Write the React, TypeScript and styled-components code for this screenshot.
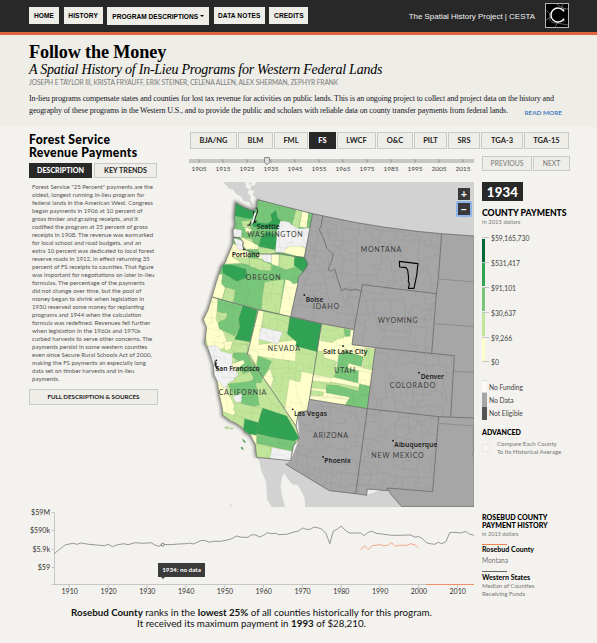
import React from 'react';
import styled, { createGlobalStyle } from 'styled-components';

const sans = 'Lato, "Liberation Sans", sans-serif';
const serif = '"Liberation Serif", serif';

const GlobalStyle = createGlobalStyle`
  * { box-sizing: border-box; }
  body { margin: 0; background: #f3f2ee; font-family: ${sans}; color: #222; }
  p, h1, h2, h3 { margin: 0; }
  button { font: inherit; margin: 0; padding: 0; border: 0; cursor: pointer; }
`;

const Page = styled.div`
  width: 597px;
  height: 643px;
  overflow: hidden;
  background: #f3f2ee;
`;

/* ---------- header ---------- */

const TopBar = styled.header`
  display: flex;
  align-items: flex-start;
  height: 35px;
  padding: 0 28px 0 29px;
  background: #282828;
  border-bottom: 3px solid #e0643c;
`;

const Nav = styled.nav`
  display: flex;
  align-items: flex-start;
  padding-top: 7px;
  gap: 4.6px;
`;

const NavButton = styled.button<{ $w: number; $tall?: boolean }>`
  width: ${(p) => p.$w}px;
  height: ${(p) => (p.$tall ? 18 : 17)}px;
  background: #eeede8;
  color: #000;
  font: bold 6.6px/17px "Liberation Sans", sans-serif;
  letter-spacing: ${(p) => (p.$tall ? 0 : 0.1)}px;
  white-space: nowrap;
`;

const Caret = styled.span`
  display: inline-block;
  margin-left: 2px;
  vertical-align: 1.5px;
  border: 2px solid transparent;
  border-top-color: #000;
  border-bottom: 0;
`;

const Brand = styled.div`
  display: flex;
  margin-left: auto;
  gap: 10px;
  color: #f2f2f2;
  font: 7.95px/33px "Liberation Sans", sans-serif;
  white-space: nowrap;
  svg { margin-top: 3px; }
`;

/* ---------- intro ---------- */

const Intro = styled.section`
  height: 92px;
  padding: 7px 0 0 29px;
  background: #eeede8;
  white-space: nowrap;
`;

const Title = styled.h1`
  font: bold 18.2px/20px ${serif};
  color: #000;
  letter-spacing: -0.14px;
`;

const Subtitle = styled.h2`
  font: italic 14px/15px ${serif};
  letter-spacing: -0.245px;
  color: #000;
`;

const Authors = styled.p`
  font-size: 6.7px;
  line-height: 11px;
  letter-spacing: -0.12px;
  color: #7b7b79;
`;

const Abstract = styled.p`
  width: 533px;
  margin-top: 5px;
  font: 8px/12px ${serif};
  letter-spacing: -0.11px;
  color: #151525;
`;

const AbstractEnd = styled.span`
  display: flex;
  justify-content: space-between;
`;

const ReadMore = styled.a`
  font: bold 6.4px/15px ${sans};
  letter-spacing: 0;
  color: #4a7fc0;
`;

/* ---------- body ---------- */

const Body = styled.main`
  display: flex;
  height: 380px;
  padding: 5px 0 0 29px;
`;

const Side = styled.aside`
  width: 161px;
  flex: none;
`;

const SideTitle = styled.h2`
  padding-top: 1px;
  font-size: 12.2px;
  font-weight: 900;
  line-height: 13.2px;
  letter-spacing: 0.3px;
  color: #000;
  white-space: nowrap;
`;

const Row = styled.div<{ $gap?: number; $mt?: number }>`
  display: flex;
  gap: ${(p) => p.$gap ?? 0}px;
  margin-top: ${(p) => p.$mt ?? 0}px;
`;

const Button = styled.button<{ $w: number; $h: number; $size: number; $active?: boolean; $light?: boolean }>`
  display: block;
  flex: none;
  width: ${(p) => p.$w}px;
  height: ${(p) => p.$h}px;
  line-height: ${(p) => p.$h - 2}px;
  border: 1px solid ${(p) => (p.$active ? '#282828' : '#c9c9c7')};
  background: ${(p) => (p.$active ? '#282828' : '#eeede8')};
  color: ${(p) => (p.$active ? '#fff' : p.$light ? '#777' : '#222')};
  font-size: ${(p) => p.$size}px;
  font-weight: ${(p) => (p.$active ? 900 : p.$light ? 400 : 700)};
  white-space: nowrap;
`;

const Description = styled.p`
  margin: 5px 0 6px 3px;
  font-size: 6.12px;
  line-height: 8px;
  color: #555;
  white-space: pre;
`;

const Content = styled.div`
  flex: none;
  width: 380px;
`;

const Slider = styled.div`
  width: 293px;
  height: 19px;
  margin-left: -1px;
`;

const Years = styled.div`
  display: flex;
  width: 288px;
  margin-left: -2px;
`;

const Year = styled.span`
  width: 24px;
  text-align: center;
  font-size: 6.5px;
  line-height: 7px;
  color: #444;
`;

const SliderTrack = styled.svg`
  display: block;
`;

const MapFrame = styled.div`
  position: relative;
  width: 284px;
  height: 325px;
  svg { display: block; }
`;

const ZoomButtons = styled.div`
  position: absolute;
  top: 6px;
  right: 2px;
  display: flex;
  flex-direction: column;
  align-items: center;
  gap: 0;
`;

const ZoomButton = styled.button<{ $focus?: boolean }>`
  width: 12px;
  height: 12px;
  box-sizing: content-box;
  border: 2px solid ${(p) => (p.$focus ? '#8ab4ea' : 'transparent')};
  border-radius: 2px;
  margin-top: ${(p) => (p.$focus ? -1 : -2)}px;
  background: #383838;
  background-clip: padding-box;
  color: #fff;
  font: bold 10px/11px "Liberation Sans", sans-serif;
`;

/* ---------- map legend ---------- */

const Legend = styled.div`
  width: 96px;
  padding-left: 8px;
  white-space: nowrap;
`;

const YearBadge = styled.div`
  width: 41px;
  height: 19px;
  background: #282828;
  color: #fff;
  font-size: 13.2px;
  font-weight: 900;
  line-height: 20px;
  text-align: center;
  letter-spacing: 0.2px;
`;

const LegendTitle = styled.h3<{ $size: number; $mt: number; $lh: number }>`
  margin-top: ${(p) => p.$mt}px;
  font-size: ${(p) => p.$size}px;
  font-weight: 900;
  line-height: ${(p) => p.$lh}px;
  color: #000;
`;

const Note = styled.p<{ $size?: number }>`
  font-size: ${(p) => p.$size ?? 5.9}px;
  line-height: 8px;
  color: #777;
  white-space: pre;
`;

const Scale = styled.div`
  height: 142px;
  padding-top: 7px;
`;

const Step = styled.div`
  display: flex;
  height: 24.9px;
`;

const StepBar = styled.span<{ $fill: string }>`
  width: 3px;
  height: 23px;
  margin-top: 5.5px;
  background: ${(p) => p.$fill};
`;

const Tick = styled.span`
  width: 7px;
  height: 1px;
  margin: 4px 2px 0 -3px;
  background: #c6c6c4;
`;

const StepLabel = styled.span`
  font-size: 6.75px;
  line-height: 10px;
  color: #444;
`;

const Key = styled.div<{ $fill: string; $edge: string }>`
  display: flex;
  align-items: center;
  height: 13.4px;
  gap: 2px;
  font-size: 6.7px;
  color: #444;
  &::before {
    content: '';
    width: 5px;
    height: 11.5px;
    background: ${(p) => p.$fill};
    border: solid ${(p) => p.$edge};
    border-width: 1px 0;
  }
`;

const Compare = styled.label`
  display: flex;
  gap: 7px;
  margin-top: 2.5px;
`;

const CheckBox = styled.span`
  width: 8px;
  height: 8px;
  margin-top: 4px;
  background: #f8f4f2;
  border: 1px solid #ebe6e3;
`;

/* ---------- history chart ---------- */

const History = styled.section`
  position: relative;
  display: flex;
  height: 99px;
  svg { display: block; flex: none; }
`;

const HistoryLegend = styled.div`
  padding: 6.5px 0 0 8px;
  white-space: nowrap;
`;

const SeriesLine = styled.span<{ $color: string; $mt: number }>`
  display: block;
  width: 25px;
  height: 1px;
  margin-top: ${(p) => p.$mt}px;
  background: ${(p) => p.$color};
`;

const SeriesName = styled.p`
  margin-top: 0.5px;
  font-size: 7.1px;
  font-weight: 700;
  line-height: 9px;
  color: #000;
`;

const Tooltip = styled.div`
  position: absolute;
  left: 158px;
  top: 56px;
  width: 47px;
  height: 14px;
  background: #3b3b3b;
  color: #fff;
  font-size: 6.3px;
  font-weight: 700;
  line-height: 14px;
  text-align: center;
  &::after {
    content: '';
    position: absolute;
    left: 3px;
    top: 14px;
    border: 2px solid transparent;
    border-top-color: #3b3b3b;
    border-bottom: 0;
  }
`;

const Summary = styled.p`
  width: 503px;
  padding-top: 1px;
  font-size: 9.77px;
  line-height: 11px;
  text-align: center;
  color: #111;
`;

/* ---------- map data, three units to a pixel ---------- */

const pale = '#ffffcc';
const light = '#c2e699';
const mid = '#78c679';
const deep = '#31a354';
const none = '#f1f1f2';

const coast =
  'M203 65 L200 88 L190 99 L165 90 L137 75 L133 120 L136 140 L129 158 L130 178 L128 200 L105 255 L95 265 L80 310 L66 357 L55 395 L40 425 L50 448 L45 495 L56 516 L70 561 L72 590 L82 611 L88 651 L97 690 L98 711 L120 728 L138 736 L160 752 L165 762 L182 772 L196 800 L200 838';

const states: Record<string, string> = {
  WA: 'M203 65 L368 107 L343 238 L310 235 L270 226 L245 228 L205 228 L162 215 L155 185 L130 178 L129 158 L136 140 L133 120 L137 75 L165 90 L190 99 L200 88Z',
  OR: 'M130 178 L155 185 L162 215 L205 228 L245 228 L270 226 L310 235 L343 238 L354 258 L345 275 L325 298 L323 320 L302 416 L205 395 L66 357 L80 310 L95 265 L105 255 L128 200Z',
  CA: 'M66 357 L205 395 L172 528 L318 744 L328 781 L310 804 L304 831 L302 848 L200 838 L196 800 L182 772 L165 762 L160 752 L138 736 L120 728 L98 711 L97 690 L88 651 L82 611 L72 590 L70 561 L56 516 L45 495 L50 448 L40 425 L55 395Z',
  NV: 'M205 395 L302 416 L395 437 L358 664 L352 698 L325 702 L318 744 L172 528Z',
  UT: 'M395 437 L492 455 L486 500 L556 509 L532 692 L358 664Z',
};

const patches: Record<string, [string, string][]> = {
  WA: [
    [mid, '120,60 370,60 370,240 120,240'],
    [deep, '137,75 165,90 196,98 190,122 165,120 135,113'],
    [light, '155,130 185,126 180,150 158,148'],
    [none, '130,152 155,156 154,178 128,176'],
    [pale, '164,148 184,152 184,168 168,162'],
    [deep, '185,131 232,137 246,128 242,110 258,96 262,118 272,128 262,155 230,150 190,146'],
    [mid, '155,170 215,160 212,200 165,180'],
    [light, '158,178 184,182 190,192 160,192'],
    [pale, '150,176 186,192 206,204 204,214 168,214 158,200'],
    [deep, '215,176 232,160 262,172 256,216 206,204'],
    [none, '262,152 272,128 298,132 305,140 325,140 325,152 360,150 350,212 335,205 285,224 256,222'],
    [light, '318,94 337,98 326,152 306,140 312,120'],
    [pale, '337,98 356,104 350,150 328,146'],
    [mid, '356,104 370,106 362,132 352,138'],
    [pale, '282,224 286,212 300,205 335,205 348,212 343,240'],
    [light, '205,206 256,216 256,230 205,230'],
  ],
  OR: [
    [mid, '50,170 360,170 360,420 50,420'],
    [pale, '125,196 160,205 182,230 162,256 103,258'],
    [none, '130,180 158,188 162,215 145,215'],
    [light, '128,236 182,240 178,262 155,256'],
    [none, '206,228 245,222 245,256 222,250'],
    [pale, '200,226 216,228 216,246 205,240'],
    [pale, '245,228 268,230 266,266 244,258'],
    [light, '268,230 314,235 316,266 290,276 266,266'],
    [deep, '314,235 343,238 355,258 340,282 312,262'],
    [light, '176,240 204,242 244,260 244,278 210,276 178,264'],
    [deep, '98,262 122,260 168,274 172,298 140,310 98,284'],
    [pale, '78,286 98,290 94,316 106,330 96,365 60,358'],
    [light, '108,328 136,336 130,378 96,366'],
    [light, '224,312 282,304 268,408 214,394 218,350'],
    [pale, '286,304 300,308 310,318 325,314 302,420 268,408'],
  ],
  CA: [
    [light, '30,340 340,340 340,860 30,860'],
    [pale, '60,355 84,364 78,425 100,462 112,495 98,512 56,516 36,430'],
    [mid, '84,362 156,382 146,420 154,440 134,474 88,452 84,435 108,415 82,400'],
    [light, '82,400 96,405 112,404 108,422 92,430'],
    [deep, '158,382 202,396 182,492 134,484 150,446 146,422'],
    [light, '120,496 172,500 172,528 128,522'],
    [pale, '100,492 128,490 122,512 106,518'],
    [none, '50,506 78,502 94,520 126,528 128,568 144,586 142,600 112,618 108,645 82,615 56,560'],
    [mid, '130,525 168,524 184,554 220,590 214,614 178,616 192,600 158,584 130,554 144,548 128,536'],
    [pale, '126,556 160,546 164,556 130,580'],
    [light, '132,600 180,580 190,598 170,614 136,624'],
    [mid, '114,618 196,608 208,682 164,690 140,654 126,642'],
    [pale, '72,606 86,610 108,636 124,664 142,700 128,712 98,700'],
    [none, '128,656 156,646 154,672 138,674'],
    [light, '136,672 216,692 210,736 144,714 130,694'],
    [deep, '164,722 206,734 202,768 190,778 160,756'],
    [deep, '218,690 290,714 328,781 308,792 202,768 206,728'],
    [mid, '202,770 318,790 308,820 198,796'],
    [pale, '180,768 198,772 200,800 190,790'],
    [none, '246,808 305,820 302,850 240,846'],
  ],
  NV: [
    [light, '170,390 400,390 400,750 170,750'],
    [pale, '200,393 222,400 206,500 320,485 316,550 240,540 205,534 172,528'],
    [light, '222,400 300,418 292,464 216,450'],
    [none, '214,448 278,462 264,498 206,484'],
    [deep, '300,416 396,437 384,522 316,504 320,492 292,468'],
    [mid, '205,534 245,550 232,578 214,604 200,568'],
    [pale, '218,602 240,572 250,602 242,632'],
    [pale, '335,580 370,588 356,702 318,748 284,698 298,604 330,612'],
    [pale, '172,512 205,522 198,560'],
  ],
  UT: [
    [pale, '350,430 560,430 560,700 350,700'],
    [light, '395,437 466,450 460,480 440,484 428,494 392,488'],
    [mid, '462,452 482,455 480,475 464,476'],
    [light, '382,518 402,520 400,538 440,550 430,600 366,588'],
    [mid, '446,530 470,520 520,536 515,566 475,556 474,570 506,578 506,616 432,598 442,560'],
    [light, '524,510 556,514 546,576 518,570'],
    [light, '366,602 508,628 506,640 362,630'],
    [light, '360,636 402,642 398,655 360,650'],
    [mid, '410,620 440,622 506,640 508,618 542,624 532,694 464,682 480,658 408,644'],
    [pale, '506,578 542,584 538,624 504,616'],
    [pale, '366,592 422,602 420,614 364,608'],
    [pale, '360,652 474,664 464,682 358,666'],
  ],
};

const grayLand =
  'M368 107 L420 118 L500 134 L580 147 L680 160 L755 167 L852 174 V986 H635 L602 948 L592 930 L592 938 L532 933 L530 952 L497 947 L418 938 L286 858 L302 848 L328 781 L302 416 L325 298 L354 258 L343 238Z';

const countyZones = [
  'M368 107 L500 134 L580 147 L755 167 L739 347 L517 320 L492 455 L302 416 L354 258 L343 238Z',
  'M517 320 L739 347 L725 528 L486 500Z',
  'M556 509 L793 533 L782 716 L532 692Z',
  'M532 692 L746 716 L728 941 L592 930 L497 947Z',
  'M358 664 L532 692 L497 947 L418 938 L286 858 L328 781 L318 744Z',
];

const borders = [
  'M203 65 L368 107 L420 118 L500 134 L580 147 L680 160 L755 167 L852 174',
  'M368 107 L343 238 L354 258 L345 275 L325 298 L323 320 L302 416',
  'M162 215 L205 228 L245 228 L270 226 L310 235 L343 238',
  'M66 357 L205 395 L302 416 L395 437 L492 455',
  'M205 395 L172 528 L318 744 L328 781 L310 804 L302 848 L200 838',
  'M395 437 L358 664 L352 698 L325 702 L318 744',
  'M358 664 L532 692 L746 716 L852 720',
  'M398 115 L394 142 L388 155 L402 186 L410 210 L430 230 L424 252 L414 275 L424 280 L434 272 L442 300 L455 338 L466 332 L480 337 L502 334 L514 341',
  'M517 320 L492 455 L486 500 L556 509 L793 533 L782 716',
  'M517 320 L739 347 L725 528',
  'M755 167 L745 303 L739 347',
  'M556 509 L532 692 L497 947',
  'M746 716 L728 941 L592 930 L592 938 L532 933 L530 952 L497 947 L418 938 L286 858',
  'M592 930 L602 948 L635 986 H852',
];

const outerBorders =
  'M745 303 L852 312 M732 437 L852 446 M790 580 L852 583 M748 736 L852 744 M850 744 V820 L847 835';

const wobble = (n: number) => {
  const s = Math.sin(n * 127.1 + 311.7) * 43758.5453;
  return s - Math.floor(s);
};

/* Irregular county grid with a few joints left open. */
const countyMesh = (x0: number, y0: number, x1: number, y1: number, step: number) => {
  const pt = (i: number, j: number) => {
    const x = x0 + i * step + (wobble(i * 31 + j * 7) - 0.5) * step * 0.7 - j * 2;
    const y = y0 + j * step + (wobble(i * 13 + j * 57) - 0.5) * step * 0.7 + i * 3;
    return [x, y];
  };
  let d = '';
  const cols = Math.ceil((x1 - x0) / step);
  const rows = Math.ceil((y1 - y0) / step);
  for (let i = 0; i < cols; i++) {
    for (let j = 0; j < rows; j++) {
      const [ax, ay] = pt(i, j);
      const [bx, by] = pt(i + 1, j);
      const [cx, cy] = pt(i, j + 1);
      if (wobble(i * 5 + j * 91) > 0.2) {
        const mx = (ax + bx) / 2;
        d += `M${ax.toFixed(0)} ${ay.toFixed(0)}L${mx.toFixed(0)} ${(ay + 3).toFixed(0)}L${(mx + 2).toFixed(0)} ${(by - 2).toFixed(0)}L${bx.toFixed(0)} ${by.toFixed(0)}`;
      }
      if (wobble(i * 71 + j * 3) > 0.2) {
        const my = (ay + cy) / 2;
        d += `M${ax.toFixed(0)} ${ay.toFixed(0)}L${(ax + 2).toFixed(0)} ${my.toFixed(0)}L${(cx - 2).toFixed(0)} ${(my + 3).toFixed(0)}L${cx.toFixed(0)} ${cy.toFixed(0)}`;
      }
    }
  }
  return d;
};

const grayMesh = countyMesh(280, 90, 800, 960, 37);
const colorMesh = countyMesh(30, 60, 570, 860, 40);

const stateNames: [string, number, number, number][] = [
  ['WASHINGTON', 172, 338, 176],
  ['OREGON', 167, 272, 305],
  ['IDAHO', 369, 447, 392],
  ['MONTANA', 512, 634, 222],
  ['WYOMING', 563, 683, 434],
  ['NEVADA', 233, 330, 518],
  ['CALIFORNIA', 86, 229, 650],
  ['ARIZONA', 369, 474, 780],
  ['UTAH', 433, 495, 585],
  ['COLORADO', 599, 736, 630],
  ['NEW MEXICO', 544, 701, 840],
];

const cities: [string, number, number, number, number, number][] = [
  ['Seattle', 200, 269, 153, 195, 132],
  ['Portland', 125, 209, 237, 161, 214],
  ['Boise', 347, 400, 372, 343, 351],
  ['Salt Lake City', 400, 532, 527, 459, 504],
  ['San Francisco', 77, 209, 579, 79, 547],
  ['Las Vegas', 312, 411, 713, 308, 694],
  ['Denver', 692, 762, 602, 687, 584],
  ['Albuquerque', 613, 742, 807, 609, 788],
  ['Phoenix', 403, 482, 854, 399, 837],
];

function WesternMap() {
  return (
    <svg width="284" height="325" viewBox="0 12 852 975">
      <defs>
        <filter id="soft" x="-20%" y="-20%" width="140%" height="140%">
          <feGaussianBlur stdDeviation="4.5" />
        </filter>
        {Object.keys(states).map((s) => (
          <clipPath id={`clip-${s}`} key={s}>
            <path d={states[s]} />
          </clipPath>
        ))}
        <clipPath id="clip-gray">
          <path d={countyZones.join(' ')} />
        </clipPath>
      </defs>
      <path
        fill="#d2d2d2"
        d="M100 12 H852 V180 L755 172 L580 152 L420 123 L203 70 L196 90 L186 92 L178 72 L162 70 L152 55 L138 48 L130 35 L118 32Z"
      />
      <path
        fill="#f3f2ee"
        d="M166 12 H198 L196 20 L184 24 L180 36 L193 38 L188 50 L198 62 L202 80 L194 92 L186 88 L188 76 L180 66 L183 54 L172 46 L178 34 L168 28Z"
      />
      <path fill="#d2d2d2" d="M176 14 L188 16 L180 22Z M185 78 L190 80 L188 86Z" />
      <path
        fill="#d2d2d2"
        d="M200 838 L302 844 L420 935 L530 950 L592 930 L635 987 H345 L344 960 L334 940 L324 922 L306 918 L290 898 L284 886 L276 896 L272 925 L276 955 L286 987 H246 L232 966 L228 910 L214 880 L208 850Z M120 978 L123 976 L124 987 L121 987Z"
      />
      <path d={coast} fill="none" stroke="#444" strokeWidth="11" opacity="0.6" filter="url(#soft)" />
      <path d={grayLand} fill="#a6a6a6" />
      <g clipPath="url(#clip-gray)">
        <path d={grayMesh} fill="none" stroke="#999" strokeWidth="1.6" />
      </g>
      {Object.keys(states).map((s) => (
        <g key={s} clipPath={`url(#clip-${s})`}>
          {patches[s].map(([fill, points], i) => (
            <polygon key={i} points={points} fill={fill} stroke="#7d8a70" strokeOpacity="0.35" strokeWidth="1.4" />
          ))}
          <path d={colorMesh} fill="none" stroke="#6f7a66" strokeOpacity="0.2" strokeWidth="1.4" />
        </g>
      ))}
      <g fill={light} stroke="#8aa070" strokeWidth="1">
        <path d="M103 748 L114 745 L118 752 L108 752Z M120 749 L131 750 L124 754Z" />
        <path fill={deep} d="M157 783 L162 786 L168 794 L161 792Z M153 807 L158 808 L160 816 L154 812Z" />
      </g>
      <path
        d="M200 88 L203 100 L196 118 L192 134 L200 128 M190 99 L192 112 M184 130 L178 140 M172 142 L182 141"
        fill="none"
        stroke="#2c2c2c"
        strokeWidth="3.4"
      />
      <path d="M196 104 L192 118 L186 136" fill="none" stroke={none} strokeWidth="5" />
      <path d="M130 178 L150 180 L160 192 L158 204 L164 216" fill="none" stroke="#555" strokeWidth="2.4" />
      <path d={coast} fill="none" stroke="#666" strokeWidth="1.8" />
      <path d="M74 548 L80 556 L78 562 L86 572 L80 574 L74 560" fill="#222" stroke="#222" strokeWidth="1.6" />
      <g fill="none" stroke="#666" strokeWidth="2.3" strokeLinejoin="round">
        {borders.map((d) => (
          <path key={d} d={d} />
        ))}
        <path d={outerBorders} stroke="#808080" strokeWidth="2" />
        <path d="M852 174 V986" stroke="#808080" />
      </g>
      <path
        d="M628 250 L684 257 L680 292 L672 331 L655 331 L658 318 L655 309 L656 300 L653 276 L648 269 L629 267Z"
        fill="none"
        stroke="#000"
        strokeWidth="3.3"
        strokeLinejoin="round"
      />
      <g fontFamily={sans} fontSize="21" fill="#3c3c3c">
        {stateNames.map(([name, x0, x1, y]) => (
          <text key={name} x={x0} y={y} textLength={x1 - x0}>
            {name}
          </text>
        ))}
      </g>
      <g fontFamily='"Noto Sans", sans-serif' fontWeight="600" fontSize="20" fill="#1c1c1c">
        {cities.map(([name, x0, x1, y, dx, dy]) => (
          <g key={name}>
            <circle cx={dx} cy={dy} r="2.8" />
            <text x={x0} y={y} textLength={x1 - x0}>
              {name}
            </text>
          </g>
        ))}
      </g>
    </svg>
  );
}

/* ---------- chart data ---------- */

const KX = 2.626;
const toPath = (pts: number[][]) =>
  pts.map(([x, y], i) => `${i ? 'L' : 'M'}${(x / KX).toFixed(1)} ${(500 + y / 3).toFixed(1)}`).join('');

const western = [
  [142, 161], [152, 152], [162, 143], [172, 134], [192, 130], [202, 133], [213, 129], [233, 133], [254, 135], [275, 137],
  [284, 133], [295, 140], [306, 135], [325, 131], [336, 134], [355, 128], [376, 130], [396, 128], [407, 135], [417, 139],
  [427, 133], [448, 134], [468, 132], [488, 131], [498, 129], [508, 132], [527, 122], [538, 121], [549, 127], [560, 124],
  [580, 124], [605, 118], [621, 108], [635, 112], [651, 112], [661, 104], [671, 105], [682, 111], [692, 106], [702, 98],
  [712, 101], [724, 100], [733, 104], [753, 103], [772, 96], [784, 93], [795, 84], [804, 88], [815, 88], [825, 81],
  [837, 84], [845, 88], [856, 100], [866, 131], [875, 94], [886, 87], [896, 78], [906, 90], [917, 99], [947, 99],
  [957, 107], [967, 97], [978, 94], [988, 100], [1028, 106], [1048, 106], [1079, 105], [1090, 112], [1099, 109], [1110, 117],
  [1120, 128], [1130, 131], [1141, 133], [1151, 127], [1160, 131], [1171, 125], [1181, 98], [1192, 97], [1212, 99], [1222, 94],
  [1233, 102], [1245, 106],
];

const rosebud = [
  [947, 150], [957, 137], [967, 149], [977, 137], [998, 134], [1008, 137], [1018, 136], [1029, 128], [1037, 139], [1049, 136],
  [1069, 136], [1079, 131], [1090, 135], [1099, 143],
];

function HistoryChart() {
  return (
    <svg width="474" height="99" viewBox="0 507 474 99">
      <g fill="none" stroke="#c6c6c4" strokeWidth="1">
        <path d="M51.5 512.5 H54.5 V584.5 M51.5 530.5 H54 M51.5 549.5 H54 M51.5 567.5 H54 M51.5 584.5 H474" />
        {Array.from({ length: 11 }, (_, i) => (
          <path key={i} d={`M${69.5 + i * 38.8} 585 V588`} />
        ))}
      </g>
      <path d="M426 584.5 H474" stroke="#ee9068" />
      <path d={toPath(western)} fill="none" stroke="#8c8c8c" strokeWidth="0.9" />
      <path d={toPath(rosebud)} fill="none" stroke="#f4a27c" strokeWidth="0.9" />
      <circle cx="162.7" cy="544.7" r="1.5" fill="#eee" stroke="#666" strokeWidth="0.8" />
      <g fontFamily={sans} fontSize="7.1" fill="#333" textAnchor="end">
        <text x="50" y="514.5">$59M</text>
        <text x="50" y="533">$590k</text>
        <text x="50" y="551.5">$5.9k</text>
        <text x="50" y="570">$59</text>
      </g>
      <g fontFamily={sans} fontSize="7" fill="#333" textAnchor="middle">
        {Array.from({ length: 11 }, (_, i) => (
          <text key={i} x={69.7 + i * 38.8} y="593.5">
            {1910 + i * 10}
          </text>
        ))}
      </g>
    </svg>
  );
}

const tabs: [string, number][] = [
  ['BJA/NG', 47], ['BLM', 35], ['FML', 34], ['FS', 27], ['LWCF', 39],
  ['O&C', 36], ['PILT', 33], ['SRS', 32], ['TGA-3', 42], ['TGA-15', 45],
];

const scaleSteps: [string, string][] = [
  ['$59,165,730', '#006837'],
  ['$531,417', deep],
  ['$91,101', mid],
  ['$30,637', light],
  ['$9,266', pale],
  ['$0', 'transparent'],
];

const descriptionText = `Forest Service "25 Percent" payments are the
oldest, longest running in-lieu program for
federal lands in the American West. Congress
began payments in 1906 at 10 percent of
gross timber and grazing receipts, and it
codified the program at 25 percent of gross
receipts in 1908. The revenue was earmarked
for local school and road budgets, and an
extra 10 percent was dedicated to local forest
reserve roads in 1912, in effect returning 35
percent of FS receipts to counties. That figure
was important for negotiations on later in-lieu
formulas. The percentage of the payments
did not change over time, but the pool of
money began to shrink when legislation in
1930 reserved some money for replanting
programs and 1944 when the calculation
formula was redefined. Revenues fell further
when legislation in the 1960s and 1970s
curbed harvests to serve other concerns. The
payments persist in some western counties
even since Secure Rural Schools Act of 2000,
making the FS payments an especially long
data set on timber harvests and in-lieu
payments.`;

export default function App() {
  return (
    <Page>
      <GlobalStyle />
      <TopBar>
        <Nav>
          <NavButton $w={30}>HOME</NavButton>
          <NavButton $w={39}>HISTORY</NavButton>
          <NavButton $w={102} $tall>
            PROGRAM DESCRIPTIONS
            <Caret />
          </NavButton>
          <NavButton $w={51}>DATA NOTES</NavButton>
          <NavButton $w={39}>CREDITS</NavButton>
        </Nav>
        <Brand>
          The Spatial History Project | CESTA
          <svg width="24" height="25" viewBox="0 0 24 25" fill="none">
            <rect x="0.5" y="0.5" width="23" height="24" fill="#000" stroke="#b5b5b5" />
            <path d="M1 7 Q6 10 5 15 T12 20 L23 22 M12 1 Q15 5 23 6 M18 1 L16 6 M1 17 L6 14 M10 24 L13 19" stroke="#8a8a8a" strokeWidth="0.7" />
            <path d="M18.8 8.2 A7 7 0 1 0 18.8 15.8" stroke="#fff" strokeWidth="1.4" />
            <path d="M18.8 5.5 V8.6 M18.8 15.4 V18.4" stroke="#fff" strokeWidth="0.8" />
          </svg>
        </Brand>
      </TopBar>

      <Intro>
        <Title>Follow the Money</Title>
        <Subtitle>A Spatial History of In-Lieu Programs for Western Federal Lands</Subtitle>
        <Authors>JOSEPH E TAYLOR III, KRISTA FRYAUFF, ERIK STEINER, CELENA ALLEN, ALEX SHERMAN, ZEPHYR FRANK</Authors>
        <Abstract>
          In-lieu programs compensate states and counties for lost tax revenue for activities on public lands. This is an
          ongoing project to collect and project data on the history and
          <AbstractEnd>
            geography of these programs in the Western U.S., and to provide the public and scholars with reliable data on
            county transfer payments from federal lands.
            <ReadMore>READ MORE</ReadMore>
          </AbstractEnd>
        </Abstract>
      </Intro>

      <Body>
        <Side>
          <SideTitle>
            Forest Service
            <br />
            Revenue Payments
          </SideTitle>
          <Row $gap={2} $mt={4}>
            <Button $w={63} $h={15} $size={7.1} $active>DESCRIPTION</Button>
            <Button $w={63} $h={15} $size={7.2}>KEY TRENDS</Button>
          </Row>
          <Description>{descriptionText}</Description>
          <Button $w={129} $h={16} $size={6.2}>FULL DESCRIPTION &amp; SOURCES</Button>
        </Side>

        <Content>
          <Row $gap={1}>
            {tabs.map(([name, w]) => (
              <Button key={name} $w={w} $h={17} $size={7.5} $active={name === 'FS'}>
                {name}
              </Button>
            ))}
          </Row>
          <Row $mt={7}>
            <Slider>
              <SliderTrack width="285" height="9" viewBox="189 156 285 9">
                <rect x="189" y="159" width="285" height="4" fill="#c6c6c3" />
                {Array.from({ length: 12 }, (_, i) => (
                  <path key={i} d={`M${199 + i * 24} 159.5 v3`} stroke="#8c8c8a" strokeWidth="0.9" />
                ))}
                <path d="M264.5 157.5 h5 v5 l-2.5 2 l-2.5 -2z" fill="#ddd" stroke="#888" />
              </SliderTrack>
              <Years>
                {Array.from({ length: 12 }, (_, i) => (
                  <Year key={i}>{1905 + i * 10}</Year>
                ))}
              </Years>
            </Slider>
            <Row $gap={1}>
              <Button $w={50} $h={15} $size={6.8} $light>PREVIOUS</Button>
              <Button $w={37} $h={15} $size={6.8} $light>NEXT</Button>
            </Row>
          </Row>
          <Row $mt={7}>
            <MapFrame>
              <WesternMap />
              <ZoomButtons>
                <ZoomButton>+</ZoomButton>
                <ZoomButton $focus>−</ZoomButton>
              </ZoomButtons>
            </MapFrame>
            <Legend>
              <YearBadge>1934</YearBadge>
              <LegendTitle $size={8.7} $mt={7} $lh={10}>COUNTY PAYMENTS</LegendTitle>
              <Note>in 2015 dollars</Note>
              <Scale>
                {scaleSteps.map(([label, fill]) => (
                  <Step key={label}>
                    <StepBar $fill={fill} />
                    <Tick />
                    <StepLabel>{label}</StepLabel>
                  </Step>
                ))}
              </Scale>
              <Row $mt={12} />
              <Key $fill="#fbfaf9" $edge="#d8d8d6">No Funding</Key>
              <Key $fill="#a5a5a5" $edge="#a5a5a5">No Data</Key>
              <Key $fill="#555" $edge="#555">Not Eligible</Key>
              <LegendTitle $size={7} $mt={8} $lh={9}>ADVANCED</LegendTitle>
              <Compare>
                <CheckBox />
                <Note $size={6.1}>{'Compare Each County\nTo Its Historical Average'}</Note>
              </Compare>
            </Legend>
          </Row>
        </Content>
      </Body>

      <History>
        <HistoryChart />
        <Tooltip>1934: no data</Tooltip>
        <HistoryLegend>
          <LegendTitle $size={7.1} $mt={0} $lh={8}>
            ROSEBUD COUNTY
            <br />
            PAYMENT HISTORY
          </LegendTitle>
          <Note $size={5.6}>in 2015 dollars</Note>
          <SeriesLine $color="#ee8450" $mt={6} />
          <SeriesName>Rosebud County</SeriesName>
          <Row $mt={2} />
          <Note $size={6.6}>Montana</Note>
          <SeriesLine $color="#666" $mt={7} />
          <SeriesName>Western States</SeriesName>
          <Note $size={6.1}>{'Median of Counties\nReceiving Funds'}</Note>
        </HistoryLegend>
      </History>

      <Summary>
        <b>Rosebud County</b> ranks in the <b>lowest 25%</b> of all counties historically for this program.
        <br />
        It received its maximum payment in <b>1993</b> of $28,210.
      </Summary>
    </Page>
  );
}
